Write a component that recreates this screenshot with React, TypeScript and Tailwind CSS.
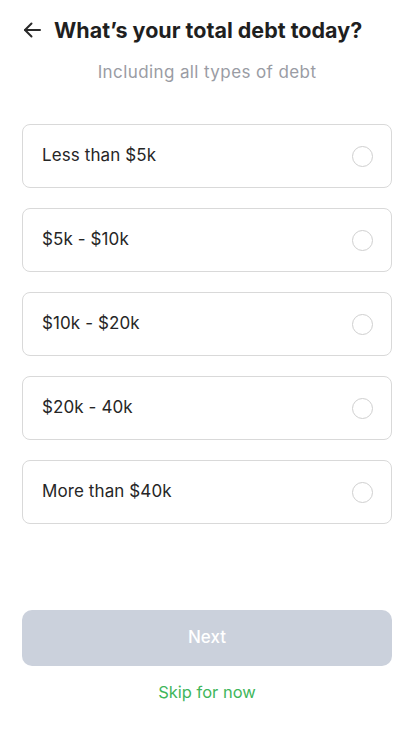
import { useState } from "react";

const OPTIONS = ["Less than $5k", "$5k - $10k", "$10k - $20k", "$20k - 40k", "More than $40k"];

export default function App() {
  const [selected, setSelected] = useState<string | null>(null);

  return (
    <div className="min-h-screen bg-white flex flex-col px-[22px] font-['Inter',sans-serif] text-[#1f1f1f]">
      {/* Header */}
      <div className="flex items-center gap-[12px] pt-[16px]">
        <button className="w-[20px] h-[20px] flex items-center justify-center text-[#2a2a2a]">
          <svg width="20" height="20" viewBox="0 0 20 20" fill="none" stroke="currentColor" strokeWidth="2" strokeLinecap="round" strokeLinejoin="round">
            <path d="M18 10H3" />
            <path d="M9.5 3.5L3 10l6.5 6.5" />
          </svg>
        </button>
        <h1 className="text-[21.5px] font-bold leading-[28px] tracking-[0px]">What’s your total debt today?</h1>
      </div>
      <p className="text-center text-[17px] tracking-[0.4px] text-[#9a9ca4] mt-[16px] leading-[24px]">Including all types of debt</p>

      {/* Options */}
      <div className="flex flex-col gap-[20px] mt-[40px]">
        {OPTIONS.map((opt) => (
          <button
            key={opt}
            onClick={() => setSelected(opt)}
            className="h-[64px] w-full flex items-center justify-between pl-[19px] pr-[18px] rounded-[8px] border-[1.5px] border-[#d9d9d9] bg-white text-left"
          >
            <span className="text-[17px] text-[#262626] tracking-[0.1px]">{opt}</span>
            <span
              className={`w-[21px] h-[21px] rounded-full border-[1.5px] ${
                selected === opt ? "border-[#3fb65b] bg-[#3fb65b]" : "border-[#cfcfcf]"
              }`}
            />
          </button>
        ))}
      </div>

      {/* Footer */}
      <div className="mt-[86px] flex flex-col items-center">
        <button className="w-full h-[56px] rounded-[10px] bg-[#cbd1dc] text-white text-[17px] font-medium">Next</button>
        <button className="mt-[14px] text-[16.5px] text-[#3fb65b]">Skip for now</button>
      </div>
    </div>
  );
}
